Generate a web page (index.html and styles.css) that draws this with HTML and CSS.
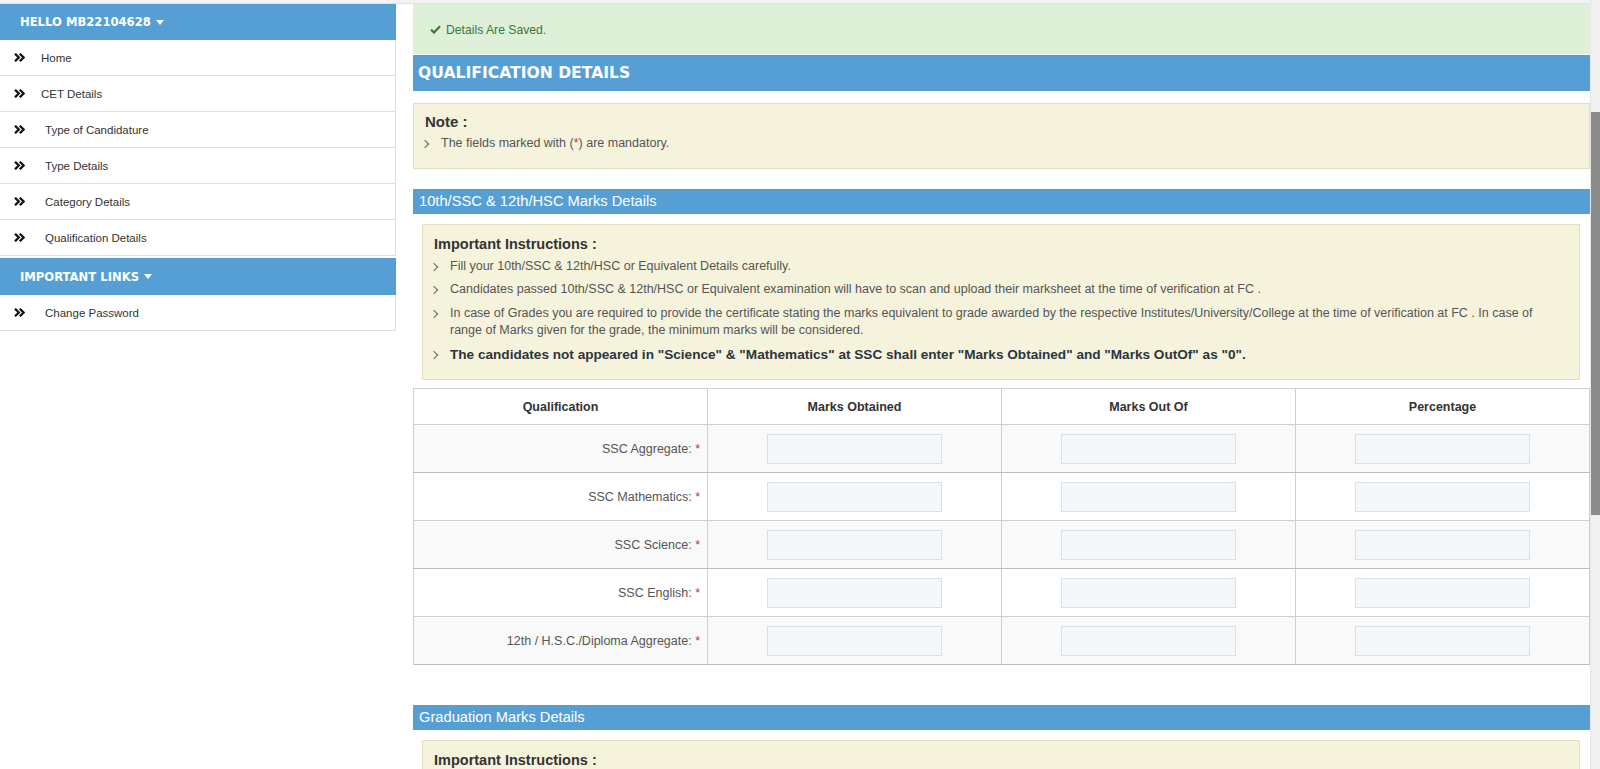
FILE: index.html
```html
<!DOCTYPE html>
<html lang="en">
<head>
<meta charset="utf-8">
<title>Qualification Details</title>
<link rel="stylesheet" href="styles.css">
</head>
<body>
<div class="screen">
  <div class="viewport">
    <div class="topline"></div>
    <div class="layout">
      <aside class="sidebar">
        <div class="side-head">HELLO MB22104628 <svg class="caret" viewBox="0 0 8 5" width="8" height="5"><path d="M0 0H8L4 5Z" fill="#fff"/></svg></div>
        <ul class="side-menu">
          <li class="side-item"><svg class="dchev" viewBox="0 0 11 9" width="11" height="9"><path d="M1 0.8L4.8 4.5L1 8.2M5.8 0.8L9.6 4.5L5.8 8.2" fill="none" stroke="#111" stroke-width="2.3"/></svg><span class="side-label">Home</span></li>
          <li class="side-item"><svg class="dchev" viewBox="0 0 11 9" width="11" height="9"><path d="M1 0.8L4.8 4.5L1 8.2M5.8 0.8L9.6 4.5L5.8 8.2" fill="none" stroke="#111" stroke-width="2.3"/></svg><span class="side-label">CET Details</span></li>
          <li class="side-item"><svg class="dchev" viewBox="0 0 11 9" width="11" height="9"><path d="M1 0.8L4.8 4.5L1 8.2M5.8 0.8L9.6 4.5L5.8 8.2" fill="none" stroke="#111" stroke-width="2.3"/></svg><span class="side-label wide">Type of Candidature</span></li>
          <li class="side-item"><svg class="dchev" viewBox="0 0 11 9" width="11" height="9"><path d="M1 0.8L4.8 4.5L1 8.2M5.8 0.8L9.6 4.5L5.8 8.2" fill="none" stroke="#111" stroke-width="2.3"/></svg><span class="side-label wide">Type Details</span></li>
          <li class="side-item"><svg class="dchev" viewBox="0 0 11 9" width="11" height="9"><path d="M1 0.8L4.8 4.5L1 8.2M5.8 0.8L9.6 4.5L5.8 8.2" fill="none" stroke="#111" stroke-width="2.3"/></svg><span class="side-label wide">Category Details</span></li>
          <li class="side-item"><svg class="dchev" viewBox="0 0 11 9" width="11" height="9"><path d="M1 0.8L4.8 4.5L1 8.2M5.8 0.8L9.6 4.5L5.8 8.2" fill="none" stroke="#111" stroke-width="2.3"/></svg><span class="side-label wide">Qualification Details</span></li>
        </ul>
        <div class="side-head side-head-2">IMPORTANT LINKS <svg class="caret" viewBox="0 0 8 5" width="8" height="5"><path d="M0 0H8L4 5Z" fill="#fff"/></svg></div>
        <ul class="side-menu">
          <li class="side-item"><svg class="dchev" viewBox="0 0 11 9" width="11" height="9"><path d="M1 0.8L4.8 4.5L1 8.2M5.8 0.8L9.6 4.5L5.8 8.2" fill="none" stroke="#111" stroke-width="2.3"/></svg><span class="side-label wide">Change Password</span></li>
        </ul>
      </aside>

      <main class="main">
        <div class="alert"><svg class="check" viewBox="0 0 11 9" width="11" height="9"><path d="M1 4.6L4 7.5L10 1.2" fill="none" stroke="#3c763d" stroke-width="2.2"/></svg>Details Are Saved.</div>
        <h2 class="page-title">QUALIFICATION DETAILS</h2>

        <div class="note">
          <h4 class="note-title">Note :</h4>
          <ul class="arrow-list">
            <li>The fields marked with (<span class="req">*</span>) are mandatory.</li>
          </ul>
        </div>

        <h3 class="section-head">10th/SSC &amp; 12th/HSC Marks Details</h3>
        <div class="instr">
          <h4 class="instr-title">Important Instructions :</h4>
          <ul class="arrow-list">
            <li>Fill your 10th/SSC &amp; 12th/HSC or Equivalent Details carefully.</li>
            <li>Candidates passed 10th/SSC &amp; 12th/HSC or Equivalent examination will have to scan and upload their marksheet at the time of verification at FC .</li>
            <li>In case of Grades you are required to provide the certificate stating the marks equivalent to grade awarded by the respective Institutes/University/College at the time of verification at FC . In case of range of Marks given for the grade, the minimum marks will be considered.</li>
            <li class="strong">The candidates not appeared in "Science" &amp; "Mathematics" at SSC shall enter "Marks Obtained" and "Marks OutOf" as "0".</li>
          </ul>
        </div>

        <table class="marks">
          <thead>
            <tr><th>Qualification</th><th>Marks Obtained</th><th>Marks Out Of</th><th>Percentage</th></tr>
          </thead>
          <tbody>
            <tr><td class="lbl">SSC Aggregate: <span class="req">*</span></td><td><input class="mark-input" type="text"></td><td><input class="mark-input" type="text"></td><td><input class="mark-input" type="text"></td></tr>
            <tr><td class="lbl">SSC Mathematics: <span class="req">*</span></td><td><input class="mark-input" type="text"></td><td><input class="mark-input" type="text"></td><td><input class="mark-input" type="text"></td></tr>
            <tr><td class="lbl">SSC Science: <span class="req">*</span></td><td><input class="mark-input" type="text"></td><td><input class="mark-input" type="text"></td><td><input class="mark-input" type="text"></td></tr>
            <tr><td class="lbl">SSC English: <span class="req">*</span></td><td><input class="mark-input" type="text"></td><td><input class="mark-input" type="text"></td><td><input class="mark-input" type="text"></td></tr>
            <tr><td class="lbl">12th / H.S.C./Diploma Aggregate: <span class="req">*</span></td><td><input class="mark-input" type="text"></td><td><input class="mark-input" type="text"></td><td><input class="mark-input" type="text"></td></tr>
          </tbody>
        </table>

        <h3 class="section-head grad-head">Graduation Marks Details</h3>
        <div class="instr">
          <h4 class="instr-title">Important Instructions :</h4>
        </div>
      </main>
    </div>
  </div>
  <div class="scrollbar"><div class="thumb"></div></div>
</div>
</body>
</html>
```

FILE: styles.css
```css
* { box-sizing: border-box; }

body {
  margin: 0;
  font-family: "Liberation Sans", Arial, sans-serif;
  background: #fff;
  overflow: hidden;
}

.screen {
  display: flex;
  width: 1600px;
  height: 769px;
  overflow: hidden;
}

.viewport {
  width: 1590px;
  flex: none;
  display: flex;
  flex-direction: column;
}

.topline {
  height: 4px;
  flex: none;
  background: #f3f3f3;
  border-bottom: 1px solid #e2e2e2;
}

.layout {
  display: flex;
  align-items: flex-start;
}

/* Sidebar */
.sidebar {
  width: 396px;
  flex: none;
}

.side-head {
  height: 36px;
  background: #559fd4;
  color: #fff;
  font-family: "DejaVu Sans", Verdana, sans-serif;
  font-weight: bold;
  font-size: 11.6px;
  padding-left: 20px;
  display: flex;
  align-items: center;
  white-space: pre;
}

.caret { margin-left: 1px; }

.side-head-2 {
  height: 37px;
  margin-top: 2px;
}

.side-menu {
  list-style: none;
  margin: 0;
  padding: 0;
}

.side-item {
  height: 36px;
  border-bottom: 1px solid #dedede;
  border-right: 1px solid #dedede;
  display: flex;
  align-items: center;
  padding-left: 14px;
  font-size: 11.5px;
  color: #333;
}

.dchev {
  flex: none;
  margin-right: 16px;
  margin-top: -1px;
}

.side-label.wide { margin-left: 4px; }

/* Main */
.main {
  margin-left: 17px;
  width: 1177px;
  flex: none;
}

.alert {
  height: 50px;
  background: #dff0d8;
  color: #3c763d;
  font-size: 12.2px;
  display: flex;
  align-items: center;
  padding-left: 17px;
  padding-top: 1px;
}

.check { margin-right: 5px; }

.page-title {
  margin: 1px 0 0;
  height: 36px;
  background: #559fd4;
  color: #fff;
  font-family: "DejaVu Sans", Verdana, sans-serif;
  font-weight: bold;
  font-size: 15.6px;
  padding-left: 5px;
  display: flex;
  align-items: center;
}

.note {
  margin-top: 12px;
  height: 66px;
  background: #f5f3dc;
  border: 1px solid #e3dfbd;
  padding: 9px 11px 0;
}

.note-title {
  margin: 0 0 4px;
  font-size: 15px;
  line-height: 18px;
  font-weight: bold;
  color: #333;
}

.arrow-list {
  list-style: none;
  margin: 0;
  padding: 0;
}

.arrow-list li {
  display: flex;
  align-items: flex-start;
  font-size: 12.5px;
  line-height: 17.5px;
  color: #555;
}

.arrow-list li::before {
  content: "";
  flex: none;
  width: 5px;
  height: 5px;
  border-top: 1px solid #666;
  border-right: 1px solid #666;
  transform: rotate(45deg);
  margin: 6px 13px 0 -3px;
}

.arrow-list li + li { margin-top: 6px; }

.arrow-list li.strong {
  font-size: 13.6px;
  font-weight: bold;
  color: #2c3440;
}

.req { color: #c9302c; }

.section-head {
  margin: 20px 0 0;
  height: 25px;
  background: #559fd4;
  color: #fff;
  font-size: 14.7px;
  line-height: 25px;
  font-weight: normal;
  padding-left: 6px;
}

.grad-head { margin-top: 40px; }

.instr {
  margin: 10px 10px 8px 9px;
  background: #f5f3dc;
  border: 1px solid #e3dfbd;
  padding: 10px 20px 16px 11px;
}

.instr-title {
  margin: 0 0 4.5px;
  font-size: 14.5px;
  line-height: 18px;
  font-weight: bold;
  color: #333;
}

/* Table */
.marks {
  width: 100%;
  border-collapse: collapse;
  table-layout: fixed;
}

.marks th {
  height: 36px;
  font-size: 12.5px;
  font-weight: bold;
  color: #333;
  border: 1px solid #cfcfcf;
  background: #fff;
  padding: 0;
}

.marks td {
  height: 48px;
  border: 1px solid #cfcfcf;
  padding: 0;
  vertical-align: middle;
}

.marks tbody tr:nth-child(odd) td { background: #f9f9f9; }
.marks tbody tr:nth-child(odd) td { border-bottom-color: #bdbdbd; }

.marks td.lbl {
  text-align: right;
  padding-right: 7px;
  font-size: 12.5px;
  color: #555;
}

.mark-input {
  display: block;
  margin: 0 auto;
  width: 175px;
  height: 30px;
  border: 1px solid #dcdfe3;
  background: #f4f8fb;
  padding: 0;
}

/* Scrollbar */
.scrollbar {
  width: 10px;
  flex: none;
  background: #f0f0f0;
  border-left: 1px solid #e6e6e6;
  display: flex;
  flex-direction: column;
}

.thumb {
  margin-top: 112px;
  height: 403px;
  background: #8b8b8b;
}
```
